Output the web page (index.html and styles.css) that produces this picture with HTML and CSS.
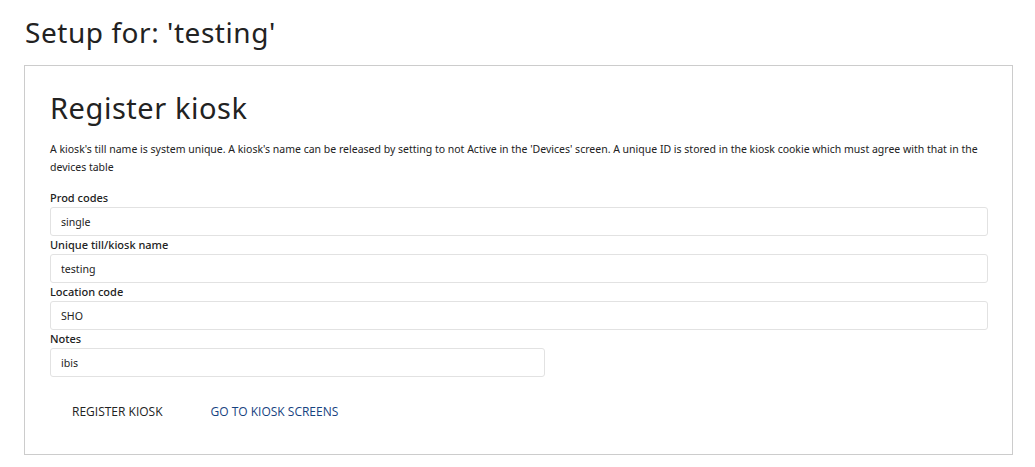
FILE: index.html
```html
<!DOCTYPE html>
<html lang="en">
<head>
<meta charset="utf-8">
<title>Setup for: 'testing'</title>
<link rel="stylesheet" href="styles.css">
</head>
<body>
  <main class="page">
    <h1 class="page-title">Setup for: 'testing'</h1>
    <section class="card">
      <h2 class="card-title">Register kiosk</h2>
      <p class="intro">A kiosk's till name is system unique. A kiosk's name can be released by setting to not Active in the 'Devices' screen. A unique ID is stored in the kiosk cookie which must agree with that in the devices table</p>
      <form class="form">
        <label class="field">
          <span class="field-label">Prod codes</span>
          <input class="field-input" type="text" value="single">
        </label>
        <label class="field">
          <span class="field-label">Unique till/kiosk name</span>
          <input class="field-input" type="text" value="testing">
        </label>
        <label class="field">
          <span class="field-label">Location code</span>
          <input class="field-input" type="text" value="SHO">
        </label>
        <label class="field field-half">
          <span class="field-label">Notes</span>
          <input class="field-input" type="text" value="ibis">
        </label>
        <div class="actions">
          <button class="btn" type="button">Register kiosk</button>
          <button class="btn btn-link" type="button">Go to kiosk screens</button>
        </div>
      </form>
    </section>
  </main>
</body>
</html>
```
FILE: styles.css
```css
* { box-sizing: border-box; }

html, body {
  margin: 0;
  background: #fff;
}

body {
  font-family: "Noto Sans", "Open Sans", sans-serif;
  color: #222;
}

.page {
  padding: 14px 22px 0 24px;
}

.page-title {
  margin: 0 0 15px 1px;
  font-family: "Noto Sans", sans-serif;
  font-weight: 400;
  font-size: 28px;
  line-height: 36px;
  letter-spacing: 0.55px;
  color: #222;
}

.card {
  border: 1px solid #ccc;
  padding: 22px 24px 30px 25px;
  height: 390px;
}

.card-title {
  margin: 0 0 12px 0;
  font-family: "Noto Sans", sans-serif;
  font-weight: 400;
  font-size: 29px;
  line-height: 40px;
  letter-spacing: 0.55px;
  color: #222;
}

.intro {
  margin: 0 0 13px 0;
  font-size: 10.5px;
  line-height: 18px;
  color: #222;
}

.form {
  display: flex;
  flex-direction: column;
}

.field {
  display: flex;
  flex-direction: column;
}

.field-label {
  font-size: 11px;
  font-weight: 500;
  line-height: 18px;
  color: #222;
}

.field-input {
  height: 29px;
  border: 1px solid #e2e2e2;
  border-radius: 3px;
  padding: 0 10px;
  font-family: inherit;
  font-size: 10.6px;
  color: #222;
  background: #fff;
  outline: none;
}

.field-half .field-input {
  width: 495px;
}

.actions {
  display: flex;
  margin-top: 20px;
  padding-left: 6px;
}

.btn {
  background: none;
  border: 0;
  padding: 6px 16px;
  margin-right: 16px;
  font-family: "Open Sans", sans-serif;
  font-size: 12px;
  text-transform: uppercase;
  color: #222;
  cursor: pointer;
}

.btn-link {
  color: #16427f;
}
```
